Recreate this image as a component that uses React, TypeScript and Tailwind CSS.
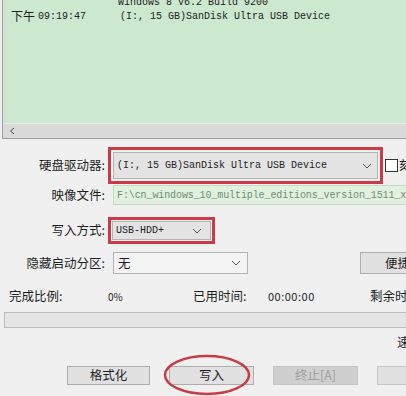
import React from 'react';

const cjk = { fontFamily: '"Microsoft YaHei", "Noto Sans CJK SC", sans-serif' };
const mono = { fontFamily: '"Liberation Mono", "Noto Sans CJK SC", monospace' };

const Chevron: React.FC = () => (
    <svg width="10" height="6" viewBox="0 0 10 6" className="shrink-0">
        <polyline points="1,1 5,5 9,1" fill="none" stroke="#555" strokeWidth="1" />
    </svg>
);

const Label: React.FC<{ text: string }> = ({ text }) => (
    <div className="w-[106px] shrink-0 text-right text-[12.5px] text-[#1e1e1e] pr-[1px]" style={cjk}>
        {text}
    </div>
);

const App: React.FC = () => {
    return (
        <div className="w-[406px] h-[396px] bg-[#f0f0f0] overflow-hidden flex flex-col" style={cjk}>
            {/* Log panel */}
            <div className="ml-[2px] h-[139px] shrink-0 border-l border-b border-[#a0a0a0] flex flex-col">
                <div className="h-[123px] bg-[#cce8cf] overflow-hidden text-[10px] text-[#222]">
                    <div className="-mt-[5px] flex h-[14px] items-center">
                        <span className="w-[115px]" />
                        <span style={mono}>Windows 8 v6.2 Build 9200</span>
                    </div>
                    <div className="flex h-[14px] items-center">
                        <span className="w-[115px] pl-[8px] text-[11px] flex items-center gap-[3px]">
                            <span style={cjk} className="text-[12px]">下午</span>
                            <span style={mono} className="text-[10px]">09:19:47</span>
                        </span>
                        <span style={mono} className="pl-[2px]">(I:, 15 GB)SanDisk Ultra USB Device</span>
                    </div>
                </div>
                <div className="h-[15px] bg-[#dadada] border-t border-[#e8e8e8] flex items-center pl-[6px] text-[#555] text-[11px]">
                    <svg width="6" height="8" viewBox="0 0 6 8">
                        <polyline points="5,1 1.5,4 5,7" fill="none" stroke="#444" strokeWidth="1" />
                    </svg>
                </div>
            </div>

            {/* Drive row */}
            <div className="mt-[8px] flex items-center h-[37px] overflow-hidden">
                <Label text="硬盘驱动器:" />
                <div className="ml-[2px] w-[275px] shrink-0 h-[37px] border-[3px] border-[#cc3a48] p-[2px] flex">
                    <div className="flex-1 bg-[#e3e3e3] border border-[#b4b4b4] flex items-center pl-[3px] pr-[5px]">
                        <span className="flex-1 text-[10px] text-[#1e1e1e]" style={mono}>(I:, 15 GB)SanDisk Ultra USB Device</span>
                        <Chevron />
                    </div>
                </div>
                <div className="ml-[2px] w-[13px] h-[13px] bg-white border border-[#333] shrink-0" />
                <span className="ml-[1px] shrink-0 text-[12.5px] text-[#1e1e1e] whitespace-nowrap">刻录</span>
            </div>

            {/* Image file row */}
            <div className="mt-[1px] flex items-center h-[20px]">
                <Label text="映像文件:" />
                <div className="ml-[7px] flex-1 h-[20px] bg-[#e2f0df] border border-[#c8d8c6] border-r-0 flex items-center pl-[3px] overflow-hidden">
                    <span className="text-[10px] text-[#6f8f71] whitespace-nowrap tracking-[-0.1px]" style={mono}>
                        F:\cn_windows_10_multiple_editions_version_1511_x64
                    </span>
                </div>
            </div>

            {/* Write mode row */}
            <div className="mt-[12px] flex items-center h-[27px]">
                <Label text="写入方式:" />
                <div className="ml-[2px] w-[107px] shrink-0 h-[27px] border-[3px] border-[#cc3a48] p-[1px] flex">
                    <div className="flex-1 bg-[#e3e3e3] border border-[#b4b4b4] flex items-center pl-[3px] pr-[8px]">
                        <span className="flex-1 text-[10px] text-[#1e1e1e]" style={mono}>USB-HDD+</span>
                        <Chevron />
                    </div>
                </div>
            </div>

            {/* Hidden partition row */}
            <div className="mt-[8px] flex items-center h-[22px]">
                <Label text="隐藏启动分区:" />
                <div className="ml-[7px] w-[135px] shrink-0 h-[22px] bg-[#f3f3f3] border border-[#b4b4b4] flex items-center pl-[4px] pr-[6px]">
                    <span className="flex-1 text-[12.5px] text-[#1e1e1e]">无</span>
                    <Chevron />
                </div>
                <div className="ml-[112px] flex-1 h-[22px] bg-[#e1e1e1] border border-[#adadad] border-r-0 flex items-center pl-[24px] overflow-hidden">
                    <span className="text-[12.5px] text-[#1e1e1e] whitespace-nowrap">便捷</span>
                </div>
            </div>

            {/* Progress info */}
            <div className="mt-[14px] flex items-center h-[16px] text-[12.5px] text-[#1e1e1e] whitespace-nowrap overflow-hidden">
                <span className="w-[108px] shrink-0 pl-[9px]">完成比例:</span>
                <span className="w-[85px] shrink-0 text-[10px]">0%</span>
                <span className="w-[75px] shrink-0">已用时间:</span>
                <span className="w-[102px] shrink-0 text-[11px] tracking-[0.5px]">00:00:00</span>
                <span className="shrink-0">剩余时间:</span>
            </div>

            {/* Progress bar */}
            <div className="mt-[8px] ml-[4px] h-[16px] shrink-0 bg-[#e6e6e6] border border-[#bcbcbc] border-r-0" />

            <div className="mt-[6px] h-[16px] flex items-center pl-[397px] text-[12.5px] text-[#1e1e1e] whitespace-nowrap overflow-hidden">
                <span className="shrink-0">速度</span>
            </div>

            {/* Buttons */}
            <div className="mt-[16px] flex items-center h-[19px] pl-[67px] gap-[19px] whitespace-nowrap">
                <div className="w-[83px] h-[19px] shrink-0 bg-[#e1e1e1] border border-[#adadad] flex items-center justify-center text-[12.5px] text-[#1e1e1e]">
                    格式化
                </div>
                <div className="relative w-[85px] h-[19px] shrink-0 bg-[#e1e1e1] border border-[#adadad] flex items-center justify-center text-[12.5px] text-[#1e1e1e]">
                    写入
                    <svg className="absolute left-[-8px] top-[-13px]" width="90" height="42" viewBox="0 0 90 42">
                        <ellipse cx="45" cy="21" rx="42" ry="19" fill="none" stroke="#c83a46" strokeWidth="2.5" />
                    </svg>
                </div>
                <div className="w-[85px] h-[19px] shrink-0 bg-[#cfcfcf] border border-[#c6c6c6] flex items-center justify-center text-[12.5px] text-[#a0a0a0]">
                    终止[A]
                </div>
                <div className="w-[85px] h-[19px] shrink-0 bg-[#e1e1e1] border border-[#c6c6c6] flex items-center justify-center text-[12.5px] text-[#a0a0a0]">
                    返回
                </div>
            </div>
        </div>
    );
};

export default App;
